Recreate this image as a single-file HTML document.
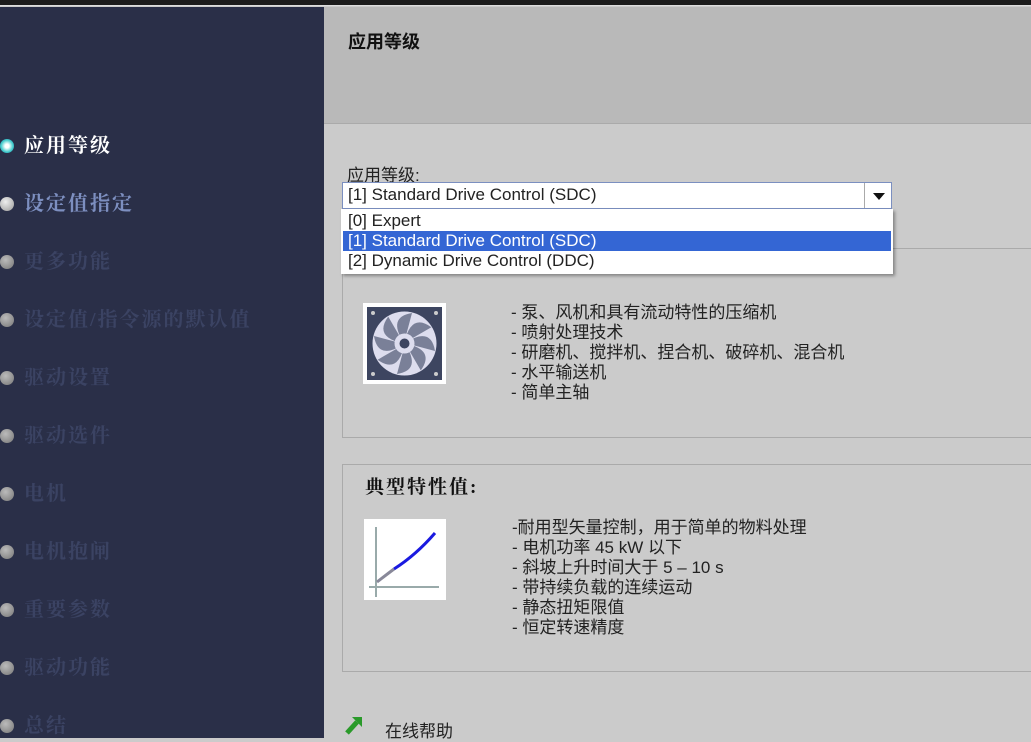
<!DOCTYPE html>
<html><head><meta charset="utf-8"><style>
*{margin:0;padding:0;box-sizing:border-box}
body{width:1031px;height:738px;overflow:hidden;background:#cbcbcb;font-family:"Liberation Sans","Noto Sans CJK SC",sans-serif;position:relative}
.top{position:absolute;left:0;top:0;width:1031px;height:6px;background:#1c1c1c;border-bottom:1px solid #ddd}
.side{position:absolute;left:0;top:7px;width:324px;height:731px;background:#2a2f48}
.it{position:absolute;left:0;height:24px;font-size:20px;font-weight:bold;letter-spacing:2px;font-family:"Liberation Serif","Noto Serif CJK SC",serif;line-height:24px}
.it .dot{position:absolute;left:0;top:5px;width:14px;height:14px;border-radius:50%;background:radial-gradient(circle at 40% 35%,#eee,#999)}
.it span{position:absolute;left:24px;white-space:nowrap}
.hdr{position:absolute;left:324px;top:7px;width:707px;height:117px;background:#b9b9b9;border-bottom:1px solid #aaa}
.t{position:absolute;white-space:nowrap;color:#222}
.box{position:absolute;left:342px;width:700px;border:1px solid #aaa}
</style></head><body>
<div class="top"></div>
<div class="side">
<div class="it" style="top:127px;color:#fff"><div class="dot" style="background:radial-gradient(circle,#fff 20%,#4cc 60%,#17a);"></div><span>应用等级</span></div>
<div class="it" style="top:185px;color:#7d8fc0"><div class="dot"></div><span>设定值指定</span></div>
<div class="it" style="top:243px;color:#3b4363"><div class="dot" style="background:radial-gradient(circle at 40% 35%,#bbb,#777)"></div><span>更多功能</span></div>
<div class="it" style="top:301px;color:#3b4363"><div class="dot" style="background:radial-gradient(circle at 40% 35%,#bbb,#777)"></div><span>设定值/指令源的默认值</span></div>
<div class="it" style="top:359px;color:#3b4363"><div class="dot" style="background:radial-gradient(circle at 40% 35%,#bbb,#777)"></div><span>驱动设置</span></div>
<div class="it" style="top:417px;color:#3b4363"><div class="dot" style="background:radial-gradient(circle at 40% 35%,#bbb,#777)"></div><span>驱动选件</span></div>
<div class="it" style="top:475px;color:#3b4363"><div class="dot" style="background:radial-gradient(circle at 40% 35%,#bbb,#777)"></div><span>电机</span></div>
<div class="it" style="top:533px;color:#3b4363"><div class="dot" style="background:radial-gradient(circle at 40% 35%,#bbb,#777)"></div><span>电机抱闸</span></div>
<div class="it" style="top:591px;color:#3b4363"><div class="dot" style="background:radial-gradient(circle at 40% 35%,#bbb,#777)"></div><span>重要参数</span></div>
<div class="it" style="top:649px;color:#3b4363"><div class="dot" style="background:radial-gradient(circle at 40% 35%,#bbb,#777)"></div><span>驱动功能</span></div>
<div class="it" style="top:707px;color:#3b4363"><div class="dot" style="background:radial-gradient(circle at 40% 35%,#bbb,#777)"></div><span>总结</span></div>
</div>
<div class="hdr"><div class="t" style="left:24px;top:21px;font-size:18px;font-weight:bold;color:#111">应用等级</div></div>
<div class="t" style="left:347px;top:161px;font-size:17px">应用等级:</div>
<div class="box" style="top:248px;height:190px"></div>
<div class="box" style="top:464px;height:208px"></div>
<div style="position:absolute;left:342px;top:182px;width:550px;height:27px;background:#fff;border:1px solid #7b8fc0"><div class="t" style="left:5px;top:2px;font-size:17px">[1] Standard Drive Control (SDC)</div><div style="position:absolute;left:521px;top:0;width:1px;height:25px;background:#aaa"></div><div style="position:absolute;left:530px;top:10px;border-left:6px solid transparent;border-right:6px solid transparent;border-top:7px solid #111"></div></div>
<div style="position:absolute;left:341px;top:209px;width:552px;height:65px;background:#fff;box-shadow:2px 2px 3px rgba(0,0,0,.35)">
<div class="t" style="left:7px;top:2px;font-size:17px">[0] Expert</div>
<div style="position:absolute;left:2px;top:22px;width:548px;height:20px;background:#3466d4"></div>
<div class="t" style="left:7px;top:22px;font-size:17px;color:#fff">[1] Standard Drive Control (SDC)</div>
<div class="t" style="left:7px;top:42px;font-size:17px">[2] Dynamic Drive Control (DDC)</div>
</div>
<div style="position:absolute;left:363px;top:303px;width:83px;height:81px;background:#fff;padding:4px">
<svg width="75" height="73" viewBox="0 0 75 73"><rect width="75" height="73" fill="#3d4560"/><circle cx="6" cy="6" r="2" fill="#ccc"/><circle cx="69" cy="6" r="2" fill="#ccc"/><circle cx="6" cy="67" r="2" fill="#ccc"/><circle cx="69" cy="67" r="2" fill="#ccc"/><circle cx="37.5" cy="36.5" r="32" fill="#dde"/><g fill="#7a8098"><path d="M37 36 Q20 10 45 6 Z" transform="rotate(0 37.5 36.5)"/><path d="M37 36 Q20 10 45 6 Z" transform="rotate(45 37.5 36.5)"/><path d="M37 36 Q20 10 45 6 Z" transform="rotate(90 37.5 36.5)"/><path d="M37 36 Q20 10 45 6 Z" transform="rotate(135 37.5 36.5)"/><path d="M37 36 Q20 10 45 6 Z" transform="rotate(180 37.5 36.5)"/><path d="M37 36 Q20 10 45 6 Z" transform="rotate(225 37.5 36.5)"/><path d="M37 36 Q20 10 45 6 Z" transform="rotate(270 37.5 36.5)"/><path d="M37 36 Q20 10 45 6 Z" transform="rotate(315 37.5 36.5)"/></g><circle cx="37.5" cy="36.5" r="10" fill="#dde"/><circle cx="37.5" cy="36.5" r="5" fill="#3d4560"/></svg></div>
<div class="t" style="left:511px;top:303px;font-size:17px;line-height:20px">- 泵、风机和具有流动特性的压缩机<br>- 喷射处理技术<br>- 研磨机、搅拌机、捏合机、破碎机、混合机<br>- 水平输送机<br>- 简单主轴</div>
<div class="t" style="left:365px;top:472px;font-size:19px;font-weight:bold;font-family:'Liberation Serif','Noto Serif CJK SC',serif;color:#111;letter-spacing:2px">典型特性值:</div>
<div style="position:absolute;left:364px;top:519px;width:82px;height:81px;background:#fff"><svg width="82" height="81"><line x1="12" y1="8" x2="12" y2="78" stroke="#9aa" stroke-width="2"/><line x1="5" y1="68" x2="75" y2="68" stroke="#9aa" stroke-width="2"/><path d="M13 63 Q22 56 30 50" stroke="#889" stroke-width="3" fill="none"/><path d="M30 50 Q52 36 71 14" stroke="#1a1ae0" stroke-width="3" fill="none"/></svg></div>
<div class="t" style="left:512px;top:518px;font-size:17px;line-height:20px">-耐用型矢量控制，用于简单的物料处理<br>- 电机功率 45 kW 以下<br>- 斜坡上升时间大于 5 – 10 s<br>- 带持续负载的连续运动<br>- 静态扭矩限值<br>- 恒定转速精度</div>
<svg style="position:absolute;left:344px;top:714px" width="20" height="22"><path d="M3 19 L13 8" stroke="#2a9a2a" stroke-width="5"/><path d="M8 3 L18 3 L18 13 Z" fill="#2a9a2a"/></svg>
<div class="t" style="left:385px;top:717px;font-size:17px">在线帮助</div>
</body></html>
